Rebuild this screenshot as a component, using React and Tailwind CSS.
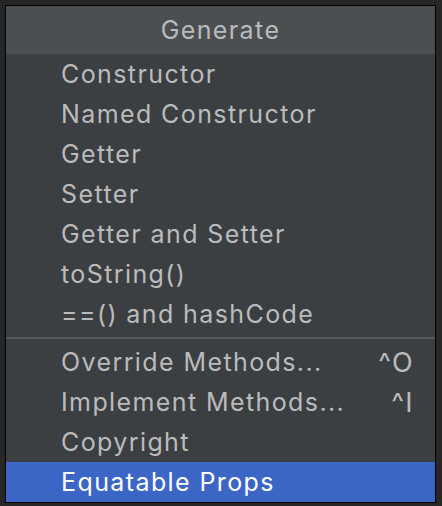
import React from 'react';

const TOP_ITEMS = [
  'Constructor',
  'Named Constructor',
  'Getter',
  'Setter',
  'Getter and Setter',
  'toString()',
  '==() and hashCode',
];

const BOTTOM_ITEMS = [
  { label: 'Override Methods...', shortcut: '^O' },
  { label: 'Implement Methods...', shortcut: '^I' },
  { label: 'Copyright' },
  { label: 'Equatable Props', selected: true },
];

function Row({ label, shortcut, selected }) {
  return (
    <div
      className={`h-[40px] flex items-center justify-between pl-[55px] pr-[21px] ${
        selected ? 'bg-[#3b66c6] text-white' : 'text-[#bbbbbb]'
      }`}
    >
      <span>{label}</span>
      {shortcut && <span className="text-[27px]">{shortcut}</span>}
    </div>
  );
}

export default function App() {
  return (
    <div
      className="w-[442px] h-[506px] bg-[#262626] pt-[5px] pl-[5px] pr-[6px] pb-[3px]"
      style={{ fontFamily: 'Inter, "Open Sans", sans-serif' }}
    >
      <div className="border border-black bg-[#3c3f41] text-[25px] tracking-[1.4px] leading-none">
        <div className="h-[48px] bg-[#4b4f52] flex items-center justify-center text-[#bbbbbb]">
          Generate
        </div>
        {TOP_ITEMS.map(t => (
          <Row key={t} label={t} />
        ))}
        <div className="h-[8px] flex items-center">
          <div className="w-full h-[2px] bg-[#55585a]" />
        </div>
        {BOTTOM_ITEMS.map(it => (
          <Row key={it.label} {...it} />
        ))}
      </div>
    </div>
  );
}
